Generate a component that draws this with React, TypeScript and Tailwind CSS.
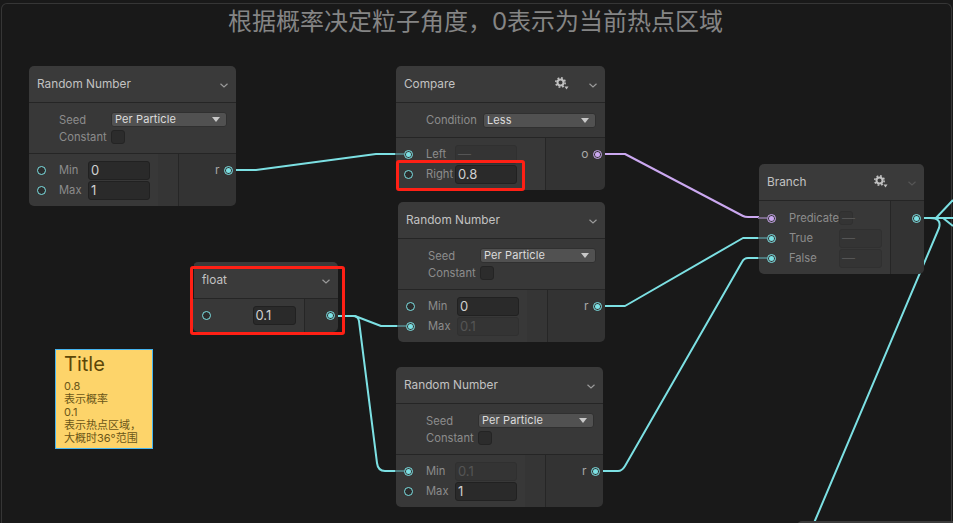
import type { ReactNode } from "react";

const FONT = "font-['Inter','Noto_Sans_CJK_SC',sans-serif]";

function Chevron({ dim = false }: { dim?: boolean }) {
  return (
    <svg width="8" height="5" viewBox="0 0 8 5" className={dim ? "text-[#555]" : "text-[#9a9a9a]"}>
      <polyline points="0.5,0.8 4,4 7.5,0.8" fill="none" stroke="currentColor" strokeWidth="1.2" />
    </svg>
  );
}

function Gear() {
  return (
    <svg width="14" height="13" viewBox="0 0 14 13" className="text-[#c0c0c0]">
      <circle cx="5.5" cy="5.5" r="3" fill="none" stroke="currentColor" strokeWidth="2" />
      <circle cx="5.5" cy="5.5" r="4.7" fill="none" stroke="currentColor" strokeWidth="1.6" strokeDasharray="1.8 1.9" />
      <polygon points="9.5,9.5 13.5,9.5 11.5,12.5" fill="currentColor" />
    </svg>
  );
}

function Port({ on = false, purple = false, stub = false }: { on?: boolean; purple?: boolean; stub?: boolean }) {
  const ring = purple ? "border-[#cba8f0]" : "border-[#7ce0e3]";
  const dot = purple ? "bg-[#cba8f0]" : "bg-[#7ce0e3]";
  return (
    <div className={`relative flex h-[9px] w-[9px] items-center justify-center rounded-full ${on ? "border" : "border-[1.5px] bg-[#2c2c2c]"} ${ring}`}>
      {on && <div className={`h-[5px] w-[5px] rounded-full ${dot}`} />}
      {stub && (
        <div className={`absolute right-[8px] top-[2.5px] h-[2px] w-[9px] ${purple ? "bg-[#7b6a8c]" : "bg-[#4e7a7e]"}`} />
      )}
    </div>
  );
}

function Field({ value, off = false, className = "w-[62px]" }: { value: string; off?: boolean; className?: string }) {
  return (
    <div
      className={`flex h-[19px] items-center rounded-[3px] border pl-[2px] pt-px text-[13px] ${className} ${
        off ? "border-[#303030] bg-[#343434] text-[#555]" : "border-[#212121] bg-[#2a2a2a] text-[#d0d0d0]"
      }`}
    >
      {value}
    </div>
  );
}

function Dropdown({ value, className }: { value: string; className: string }) {
  return (
    <div className={`flex h-[15px] items-center justify-between rounded-[3px] border border-[#303030] bg-[#515151] pl-[3px] pr-[6px] text-[11px] tracking-[0.1px] text-[#dcdcdc] ${className}`}>
      <span>{value}</span>
      <svg width="8" height="5" viewBox="0 0 8 5">
        <polygon points="0,0 8,0 4,5" fill="#c8c8c8" />
      </svg>
    </div>
  );
}

function Header({ title, gear = false, dimChevron = false }: { title: string; gear?: boolean; dimChevron?: boolean }) {
  return (
    <div className="flex h-[37px] items-center border-b border-[#252525] bg-[#3a3a3a] pl-2 pr-[8px] pt-[2px] text-[11.8px] text-[#c2c2c2]">
      <span className="flex-1">{title}</span>
      {gear && (
        <span className="mb-[4px] mr-[20px]">
          <Gear />
        </span>
      )}
      <Chevron dim={dimChevron} />
    </div>
  );
}

function Row({ port, label, input }: { port: ReactNode; label: string; input: ReactNode }) {
  return (
    <div className="grid h-5 grid-cols-[30px_29px_auto] items-center">
      <div className="pl-[7.5px]">{port}</div>
      <span className="text-[11.2px] text-[#8c8c8c]">{label}</span>
      {input}
    </div>
  );
}

function Output({ label, purple = false }: { label: string; purple?: boolean }) {
  return (
    <div className="flex h-[52px] flex-1 justify-end border-l border-[#262626] bg-[#333] pr-[3.5px] pt-[6px]">
      <div className="flex h-5 items-center gap-[4px] text-[12px] text-[#a8a8a8]">
        <span>{label}</span>
        <Port on purple={purple} />
      </div>
    </div>
  );
}

function RandomNode({
  className,
  min,
  max,
  minOn = false,
  maxOn = false,
}: {
  className: string;
  min: string;
  max: string;
  minOn?: boolean;
  maxOn?: boolean;
}) {
  return (
    <div className={`absolute w-[207px] rounded-[5px] ${className}`}>
      <div className="overflow-hidden rounded-t-[5px]">
        <Header title="Random Number" />
      </div>
      <div className="h-[51px] border-b border-[#252525] bg-[#383838] pl-[30px] pt-[9px] text-[11.2px] text-[#8c8c8c]">
        <div className="flex h-[15px] items-center">
          <span className="mt-px w-[52px]">Seed</span>
          <Dropdown value="Per Particle" className="w-[116px]" />
        </div>
        <div className="mt-[3px] flex h-[14px] items-center">
          <span className="w-[52px]">Constant</span>
          <div className="h-[14px] w-[14px] rounded-[3px] border border-[#242424] bg-[#2c2c2c]" />
        </div>
      </div>
      <div className="flex rounded-b-[5px]">
        <div className="h-[52px] w-[149px] rounded-bl-[5px] bg-[linear-gradient(to_right,#383838_129px,#353535_129px)] pt-[6px]">
          <Row port={<Port on={minOn} stub={minOn} />} label="Min" input={<Field value={min} off={minOn} />} />
          <Row port={<Port on={maxOn} stub={maxOn} />} label="Max" input={<Field value={max} off={maxOn} />} />
        </div>
        <div className="flex flex-1 overflow-hidden rounded-br-[5px]">
          <Output label="r" />
        </div>
      </div>
    </div>
  );
}

function CompareNode() {
  return (
    <div className="absolute left-[396px] top-[66px] w-[209px] rounded-[5px]">
      <div className="overflow-hidden rounded-t-[5px]">
        <Header title="Compare" gear />
      </div>
      <div className="flex h-[35px] items-center border-b border-[#252525] bg-[#383838] pl-[30px] text-[11.2px] text-[#8c8c8c]">
        <span className="w-[57px]">Condition</span>
        <Dropdown value="Less" className="w-[113px]" />
      </div>
      <div className="flex">
        <div className="h-[52px] w-[149px] rounded-bl-[5px] bg-[#383838] pt-[6px]">
          <Row port={<Port on stub />} label="Left" input={<Field value="—" off />} />
          <Row port={<Port />} label="Right" input={<Field value="0.8" />} />
        </div>
        <div className="flex flex-1 overflow-hidden rounded-br-[5px]">
          <Output label="o" purple />
        </div>
      </div>
    </div>
  );
}

function BranchRow({ label, purple = false, small = false }: { label: string; purple?: boolean; small?: boolean }) {
  return (
    <div className="grid h-5 grid-cols-[30px_50px_auto] items-center">
      <div className="pl-[7.5px]">
        <Port on purple={purple} stub />
      </div>
      <span className="text-[11.2px] text-[#8c8c8c]">{label}</span>
      <Field value="—" off className={small ? "!h-[14px] w-[14px]" : "w-[43px]"} />
    </div>
  );
}

function BranchNode() {
  return (
    <div className="absolute left-[759px] top-[164px] w-[165px] rounded-[5px]">
      <div className="overflow-hidden rounded-t-[5px]">
        <Header title="Branch" gear dimChevron />
      </div>
      <div className="flex">
        <div className="h-[73px] w-[131px] rounded-bl-[5px] bg-[#383838] pt-[7px]">
          <BranchRow label="Predicate" purple small />
          <BranchRow label="True" />
          <BranchRow label="False" />
        </div>
        <div className="flex h-[73px] flex-1 justify-end rounded-br-[5px] border-l border-[#262626] bg-[#333] pr-[3.5px] pt-[7px]">
          <div className="flex h-5 items-center">
            <Port on />
          </div>
        </div>
      </div>
    </div>
  );
}

function FloatNode() {
  return (
    <div className="absolute left-[193px] top-[262px] w-[145px] rounded-[5px]">
      <div className="overflow-hidden rounded-t-[5px] pl-px">
        <Header title="float" />
      </div>
      <div className="flex h-[33px]">
        <div className="flex w-[111px] items-center rounded-bl-[5px] bg-[#383838] pl-[8.5px]">
          <Port />
          <Field value="0.1" className="ml-[42px] w-[43px]" />
        </div>
        <div className="flex flex-1 items-center justify-end rounded-br-[5px] border-l border-[#262626] bg-[#333] pr-[3.5px]">
          <Port on />
        </div>
      </div>
    </div>
  );
}

function Wires() {
  return (
    <svg width="953" height="523" viewBox="0 0 953 523" className="absolute left-0 top-0" fill="none" strokeWidth="2" strokeLinejoin="round">
      <g stroke="#7ce0e3">
        <path d="M236 170 H256 L376 154 H396" />
        <path d="M605 306 H625 L743 238 H759" />
        <path d="M603 471 H618 Q622 471 625 466 L742 262 Q744 258 748 258 H759" />
        <path d="M338 316 H355 L381 326 H398" />
        <path d="M338 316 H353 Q358 316 359 321 L377 463 Q378 471 385 471 H396" />
        <path d="M924 218 H953" />
        <path d="M936 218 L953 200" />
        <path d="M943 218 L953 226" />
        <path d="M930 218 Q942 218 939 228 L814 523" />
      </g>
      <path d="M605 154 H625 L743 216 Q745 217 748 217 H759" stroke="#cba8f0" />
    </svg>
  );
}

function RedBox({ className }: { className: string }) {
  return <div className={`absolute rounded-[3px] border-[3px] border-[#ff2015] ${className}`} />;
}

export default function App() {
  return (
    <div className={`relative h-[523px] w-[953px] overflow-hidden bg-[#191919] ${FONT}`}>
      <div className="ml-px mt-[3px] h-[520px] w-[951px] rounded-t-[6px] border-x border-t border-[#363636]">
        <h1 className="pr-[2px] text-center text-[24px] font-normal leading-[36px] text-[#858585]">
          根据概率决定粒子角度，0表示为当前热点区域
        </h1>
      </div>

      <Wires />

      <RandomNode className="left-[29px] top-[66px]" min="0" max="1" />
      <CompareNode />
      <RandomNode className="left-[398px] top-[202px]" min="0" max="0.1" maxOn />
      <RandomNode className="left-[396px] top-[367px]" min="0.1" max="1" minOn />
      <BranchNode />
      <FloatNode />

      <RedBox className="left-[396px] top-[160px] h-[31px] w-[129px]" />
      <RedBox className="left-[190px] top-[266px] h-[69px] w-[155px]" />

      <div className="absolute left-[55px] top-[349px] h-[100px] w-[98px] border border-[#45b4f0] bg-[#fdd46a] pl-[8px] text-[#6b5618]">
        <div className="text-[20px] leading-[28px] text-[#5c4708]">Title</div>
        <div className="mt-[2px] text-[11px] leading-[13px]">
          <p>0.8</p>
          <p>表示概率</p>
          <p>0.1</p>
          <p>表示热点区域，</p>
          <p>大概时36°范围</p>
        </div>
      </div>

      <div className="absolute left-[797px] top-[521px] h-[10px] w-[170px] rounded-t-[5px] bg-[#3a3a3a]" />
    </div>
  );
}
